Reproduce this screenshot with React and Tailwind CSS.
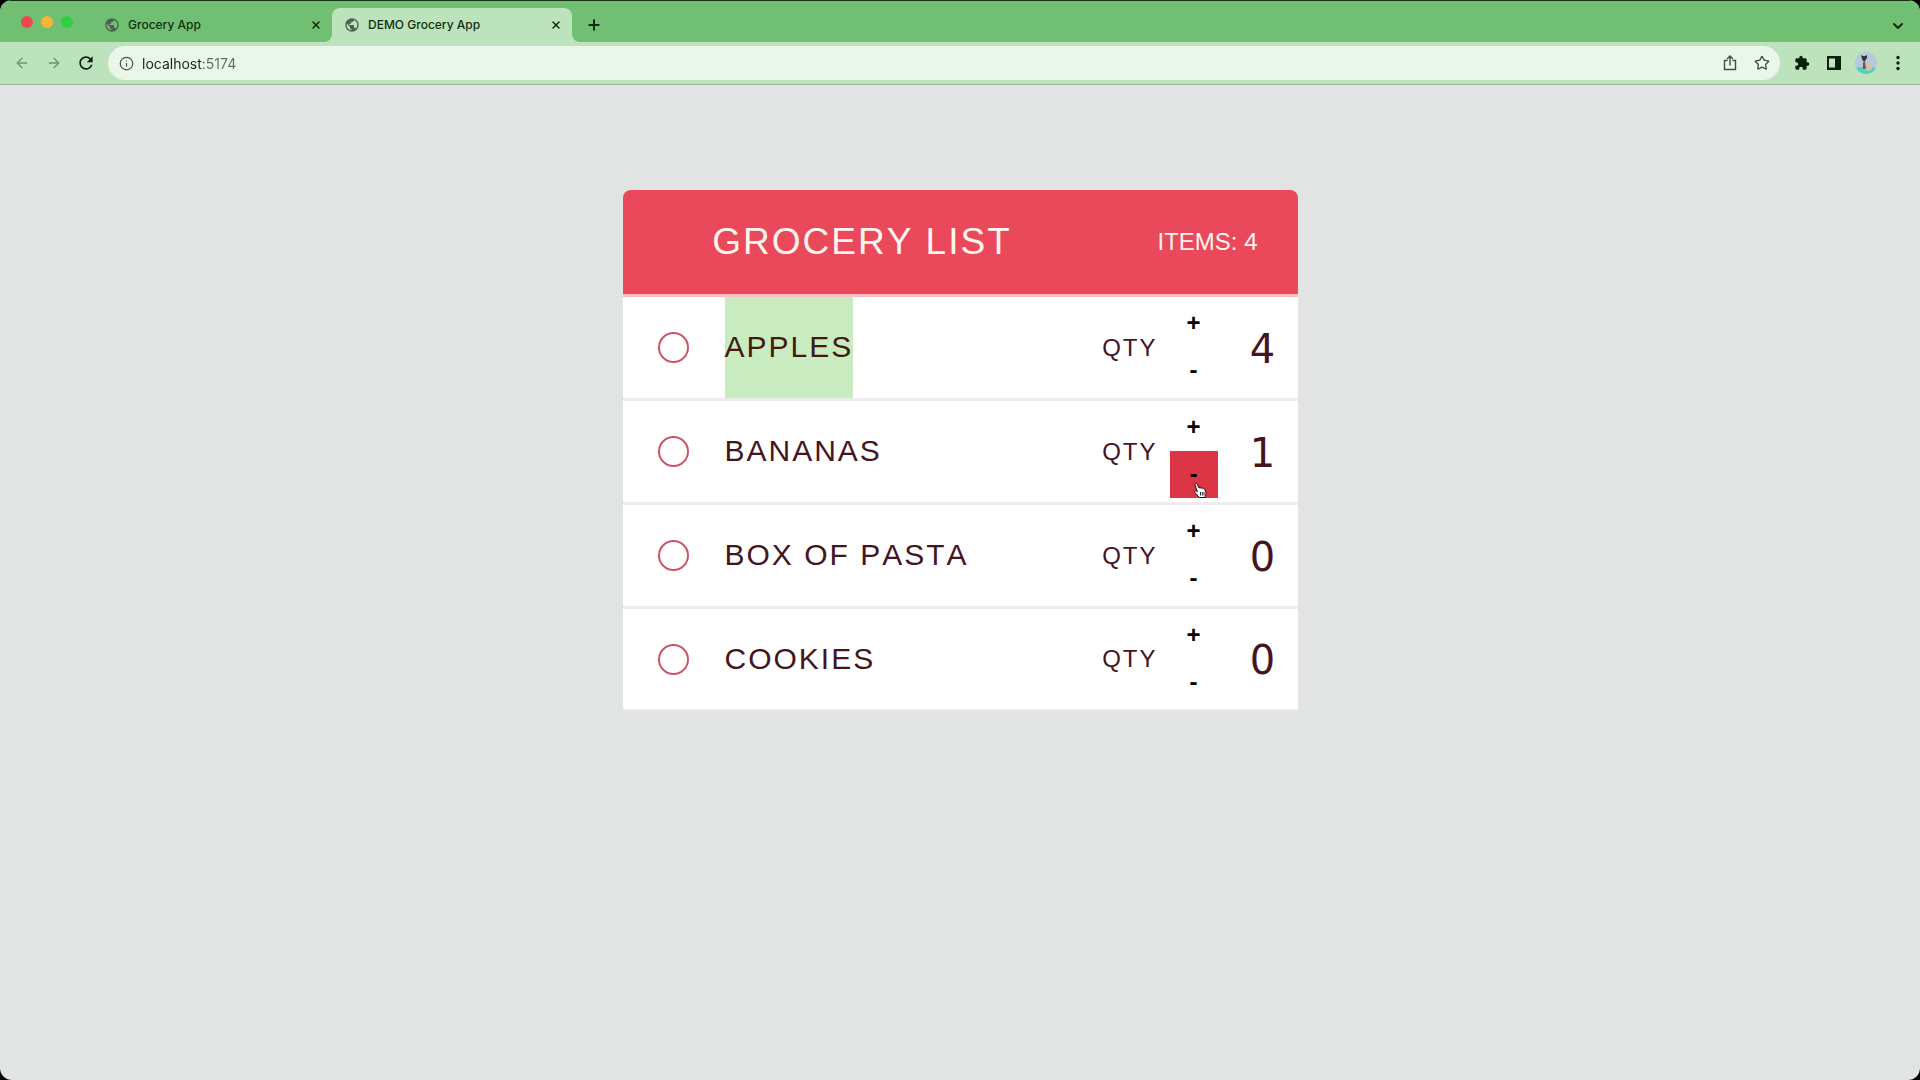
import { ArrowLeft, ArrowRight, ChevronDown, Info, Plus, Star, X } from 'lucide-react'
import { MdExtension, MdPublic, MdRefresh } from 'react-icons/md'

const groceries = [
  { id: 1, name: 'Apples', qty: 4, selected: true },
  { id: 2, name: 'Bananas', qty: 1, hovered: true },
  { id: 3, name: 'Box of pasta', qty: 0 },
  { id: 4, name: 'Cookies', qty: 0 },
]

function Tab({ title, active }) {
  return (
    <div
      className={`relative flex h-[34px] w-60 items-center gap-2 rounded-t-lg pr-2 pl-3 ${
        active ? 'bg-[#bce3bb]' : ''
      }`}
    >
      {/* Curved feet on either side of the active tab */}
      {active && (
        <>
          <span className="absolute bottom-0 -left-2 size-2 overflow-hidden">
            <span className="block size-2 rounded-br-lg shadow-[3px_3px_0_3px_#bce3bb]" />
          </span>
          <span className="absolute -right-2 bottom-0 size-2 overflow-hidden">
            <span className="block size-2 rounded-bl-lg shadow-[-3px_3px_0_3px_#bce3bb]" />
          </span>
        </>
      )}
      <MdPublic className="size-4 text-[#4c6352]" />
      <a href="#tab" className="flex-1 text-[12px] font-medium text-[#12300f]">
        {title}
      </a>
      <button aria-label={`Close ${title}`} className="p-0.5">
        <X className="size-3 text-[#0d2a0d]" strokeWidth={3} />
      </button>
    </div>
  )
}

function TabStrip() {
  return (
    <div className="flex h-[42px] items-end border-t border-[#173518] bg-[#71bf72]">
      <div className="flex items-center gap-2 self-center pl-[21px]">
        <span className="size-3 rounded-full bg-[#ee4a4c]" />
        <span className="size-3 rounded-full bg-[#f5b532]" />
        <span className="size-3 rounded-full bg-[#31cf43]" />
      </div>
      <div className="ml-[19px] flex">
        <Tab title="Grocery App" />
        <Tab title="DEMO Grocery App" active />
      </div>
      <button aria-label="New tab" className="ml-3.5 self-center pt-1.5">
        <Plus className="size-4 text-[#0d2a0d]" strokeWidth={3} />
      </button>
      <button aria-label="Search tabs" className="mr-3.5 ml-auto self-center pt-2">
        <ChevronDown className="size-4 text-[#0d2a0d]" strokeWidth={3} />
      </button>
    </div>
  )
}

function ShareIcon() {
  return (
    <svg viewBox="0 0 16 16" className="size-4" fill="none" stroke="#3f4f42" strokeWidth="1.4">
      <path d="M5.5 5.5h-3v9h11v-9h-3M8 10.5v-9M5 4l3-3 3 3" />
    </svg>
  )
}

function SidePanelIcon() {
  return (
    <svg viewBox="0 0 16 16" className="size-4">
      <path d="M1 1h14v14H1z" fill="#0c200f" />
      <path d="M3 3.5h6v9H3z" fill="#c4e6c3" />
    </svg>
  )
}

function Avatar() {
  return (
    <svg viewBox="0 0 22 22" className="size-[22px] rounded-full">
      <rect width="22" height="22" fill="#b9c9dc" />
      <path d="M0 16q10-3 22 0v6H0z" fill="#55cfc0" />
      <path d="M8 17l1-7 3-1 2 3 2-2 1 7-3 2z" fill="#d5c1a9" />
      <path d="M8 10l2-1 1 8H8z" fill="#6c5c58" />
      <path d="M6 3l2 1h2l2-1v3l-2 3H8L7 7z" fill="#33343f" />
    </svg>
  )
}

function Toolbar() {
  return (
    <div className="flex h-[43px] items-center border-b border-[#98b698] bg-[#bce3bb] px-3.5">
      <div className="flex items-center gap-4">
        <button aria-label="Back">
          <ArrowLeft className="size-4 text-[#6e9472]" />
        </button>
        <button aria-label="Forward">
          <ArrowRight className="size-4 text-[#6e9472]" />
        </button>
        <button aria-label="Reload" className="-ml-0.5">
          <MdRefresh className="size-5 text-[#0c200f]" />
        </button>
      </div>
      <div className="ml-3 flex h-[34px] flex-1 items-center gap-2 rounded-full bg-[#eaf6e9] pr-2.5 pl-[11px]">
        <Info className="size-[15px] text-[#46564a]" />
        <input
          aria-label="Address"
          defaultValue="localhost:5174"
          className="flex-1 bg-[linear-gradient(to_right,#16241a_60px,#5f6b62_60px)] bg-clip-text text-[14px] text-transparent outline-none"
        />
        <button aria-label="Share">
          <ShareIcon />
        </button>
        <button aria-label="Bookmark" className="ml-2">
          <Star className="size-4 text-[#3f4f42]" />
        </button>
      </div>
      <div className="ml-3.5 flex items-center gap-4">
        <button aria-label="Extensions">
          <MdExtension className="size-4 text-[#0c200f]" />
        </button>
        <button aria-label="Side panel">
          <SidePanelIcon />
        </button>
        <button aria-label="Profile" className="-mx-[3px]">
          <Avatar />
        </button>
        <button aria-label="Menu">
          <svg viewBox="0 0 16 16" className="size-4" fill="#0c200f">
            <circle cx="8" cy="2.5" r="1.7" />
            <circle cx="8" cy="8" r="1.7" />
            <circle cx="8" cy="13.5" r="1.7" />
          </svg>
        </button>
      </div>
    </div>
  )
}

function HandCursor() {
  return (
    <svg viewBox="0 0 14 16" className="absolute top-[31px] left-6 h-4 w-3.5">
      <path
        d="M1.200 1.500c.8-.8 1.800-.2 2.100.6l1.700 4c.5-.6 1.500-.6 1.900.1.600-.5 1.500-.4 1.900.3.800-.4 1.800 0 2 .8l1 3c.3 1.500 0 2.700-.6 3.700v1.500H5.500L2 11.800C1 10.800.2 9.700.9 9c.8-.6 1.800.1 2.500.800L1.100 3c-.200-.5-.300-1 .1-1.500z"
        fill="#fff"
        stroke="#111"
        strokeWidth="1"
      />
      <path d="M6.500 10v3.500M8.300 10v3.500M10 10v3.500" stroke="#111" strokeWidth="0.900" />
    </svg>
  )
}

function GroceryItem({ item }) {
  const id = `item-${item.id}`

  return (
    <li className="flex h-[104px] items-stretch border-b-3 border-[#ececec] bg-white text-[#45151f] last:h-[102px] last:border-b-2">
      <div className="flex w-[102px] items-center justify-center">
        <input
          id={id}
          type="checkbox"
          className="size-[31px] appearance-none rounded-full border-2 border-[#d35268]"
        />
      </div>
      <label
        htmlFor={id}
        className={`flex items-center pb-0.5 text-[30px] tracking-[2px] uppercase ${
          item.selected ? 'bg-[#c9ebc0] text-[#421a10]' : ''
        }`}
      >
        {item.name}
      </label>
      <span className="ml-auto flex items-center pr-3 text-[24px] tracking-[2px]">QTY</span>
      <div className="flex w-12 flex-col justify-center pb-0.5 text-[24px] font-bold text-black">
        <button aria-label={`Add one ${item.name}`} className="h-[47px] w-12">
          +
        </button>
        <button
          aria-label={`Remove one ${item.name}`}
          className={`relative h-[47px] w-12 ${item.hovered ? 'bg-[#dc3545]' : ''}`}
        >
          -
          {item.hovered && <HandCursor />}
        </button>
      </div>
      <output className="flex w-20 items-center justify-center pt-0.5 pl-2.5 font-['DejaVu_Sans',sans-serif] text-[40px]">
        {item.qty}
      </output>
    </li>
  )
}

export default function App() {
  return (
    <div className="min-h-screen bg-black">
      <div className="flex min-h-screen flex-col overflow-hidden rounded-xl bg-[#e2e4e3]">
        <header className="font-['Inter',sans-serif]">
          <TabStrip />
          <Toolbar />
        </header>
        <main className="flex-1 pt-[105px] font-['Liberation_Sans',Arial,sans-serif] [font-kerning:none]">
          <section className="mx-auto w-full max-w-[675px]">
            <div className="flex h-[107px] items-center rounded-t-lg border-b-3 border-[#f8bfc4] bg-[#ea485b] text-[#fff5ef]">
              <h1 className="flex-1 text-center text-[37px] tracking-[2px] uppercase">
                Grocery List
              </h1>
              <p className="pr-10 pl-14 text-[24px] uppercase">Items: {groceries.length}</p>
            </div>
            <ul className="overflow-hidden rounded-b-sm">
              {groceries.map((item) => (
                <GroceryItem key={item.id} item={item} />
              ))}
            </ul>
          </section>
        </main>
      </div>
    </div>
  )
}
